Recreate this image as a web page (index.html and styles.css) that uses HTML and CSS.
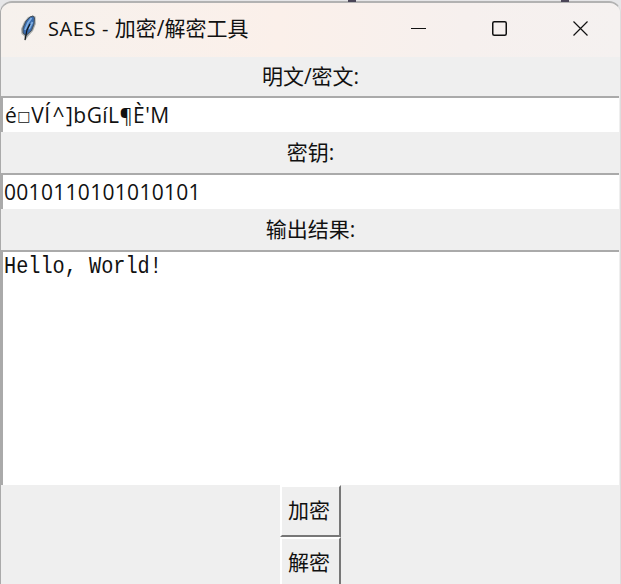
FILE: index.html
```
<!DOCTYPE html>
<html lang="zh-CN">
<head>
<meta charset="utf-8">
<title>SAES - 加密/解密工具</title>
<link rel="stylesheet" href="styles.css">
</head>
<body>
<div class="backdrop"><i class="mark first"></i><i class="mark second"></i></div>
<main class="window">
  <header class="titlebar">
    <svg class="feather" width="20" height="30" viewBox="0 0 20 30">
      <path d="M15 1.5 L17.500 2.500 L17.800 10 L15 17 L10 22.5 L7 27 L6 22 L3.5 20 L3 15 L6 8 L10 3Z" fill="#a5aaa9"/>
      <path d="M15 2 L16.500 4 L16 10 L13.500 16.5 L8 21.5 L5 19 L5 14 L8 7 L12 3Z" fill="#396bad" stroke="#46505a" stroke-width="1"/>
      <path d="M13.500 4 L10 9 L7 16 M14.500 8 L11 15" fill="none" stroke="#82b0e2" stroke-width="1.7"/>
      <path d="M12 10 L9 16 L7 26" fill="none" stroke="#101316" stroke-width="1.2"/>
    </svg>
    <h1 class="title"><span class="latin">SAES - </span>加密/解密工具</h1>
    <div class="controls">
      <svg width="16" height="16" viewBox="0 0 16 16"><path d="M0 7.5H15"/></svg>
      <svg width="16" height="16" viewBox="0 0 16 16"><rect class="box" x=".75" y=".75" width="13.5" height="13.5" rx="1.5"/></svg>
      <svg width="16" height="16" viewBox="0 0 16 16"><path class="cross" d="M.5.5l14 14M14.500.5l-14 14"/></svg>
    </div>
  </header>
  <div class="label">明文/密文:</div>
  <div class="field cipher">é<span class="square">□</span>VÍ<span class="caret">^</span>]bGíL<span class="pilcrow">¶</span>È'M</div>
  <div class="label key">密钥:</div>
  <div class="field digits">0010110101010101</div>
  <div class="label result">输出结果:</div>
  <div class="output"><span class="message">Hello, World!</span></div>
  <div class="actions">
    <button class="action">加密</button>
    <button class="action">解密</button>
  </div>
</main>
</body>
</html>
```
FILE: styles.css
```
* { box-sizing: border-box; }
body {
  margin: 0;
  width: 621px;
  height: 584px;
  overflow: hidden;
  background: #e6e6e8;
  color: #111;
  font-family: "Open Sans", "Noto Sans CJK SC", sans-serif;
}
.backdrop { height: 1px; display: flex; }
.mark { width: 8px; height: 2px; background: #4b4658; flex: none; }
.first { margin-left: 348px; }
.second { margin-left: 205px; }
.window {
  width: 621px;
  height: 590px;
  border: 1px solid #aaa;
  border-top: 2px solid #b2b2b2;
  border-right-color: #ddd;
  border-radius: 12px 12px 0 0;
  background: #efefef;
  overflow: hidden;
}
.titlebar {
  height: 54px;
  display: flex;
  align-items: center;
  padding: 0 31px 3px 17px;
  background: linear-gradient(90deg, #f6f1ed, #fbf0ea 45%, #f6f0ee 75%, #f5f1f0);
}
.feather { flex: none; }
.title {
  margin: 0 0 0 10px;
  font-size: 21px;
  font-weight: 400;
  line-height: 30px;
  white-space: pre;
  font-family: "Open Sans", "Noto Sans CJK SC", sans-serif;
}
.latin { font-size: 20px; letter-spacing: .6px; }
.controls { margin-left: auto; display: flex; gap: 65px; }
.controls svg { fill: none; stroke: #111; stroke-width: 1.2; }
.controls .box { stroke-width: 1.5; }
.label {
  height: 39px;
  line-height: 38px;
  text-align: center;
  font-size: 21px;
  white-space: pre;
}
.key, .result { height: 41px; line-height: 41px; }
.field {
  height: 36px;
  margin-right: 1px;
  border-top: 2px solid #aaa;
  border-left: 2px solid #aaa;
  background: #fff;
  padding-left: 1px;
  line-height: 34px;
  font-size: 21px;
  white-space: pre;
}
.cipher { padding-left: 2px; letter-spacing: .45px; }
.square {
  display: inline-block;
  width: 14px;
  padding-left: 0;
  font-family: "DejaVu Sans", sans-serif;
  font-size: 14px;
  line-height: 20px;
  vertical-align: 2px;
}
.caret { padding: 0 1px 0 2px; }
.pilcrow { font-size: 20px; }
.digits { letter-spacing: .3px; }
.output {
  height: 235px;
  margin-right: 1px;
  border-top: 2px solid #aaa;
  border-left: 2px solid #aaa;
  background: #fff;
  padding: 1px;
  font-family: "Liberation Mono", monospace;
  line-height: 28px;
}
.message {
  display: inline-block;
  font-size: 23px;
  transform: scaleX(.88);
  transform-origin: 0 50%;
  white-space: pre;
}
.actions { display: flex; flex-direction: column; align-items: center; }
.action {
  width: 61px;
  height: 52px;
  padding: 0 3px 4px 0;
  border: 2px solid;
  border-color: #fff #777 #777 #fff;
  background: #efefef;
  color: #111;
  font: 21px "Noto Sans CJK SC", sans-serif;
}
```
